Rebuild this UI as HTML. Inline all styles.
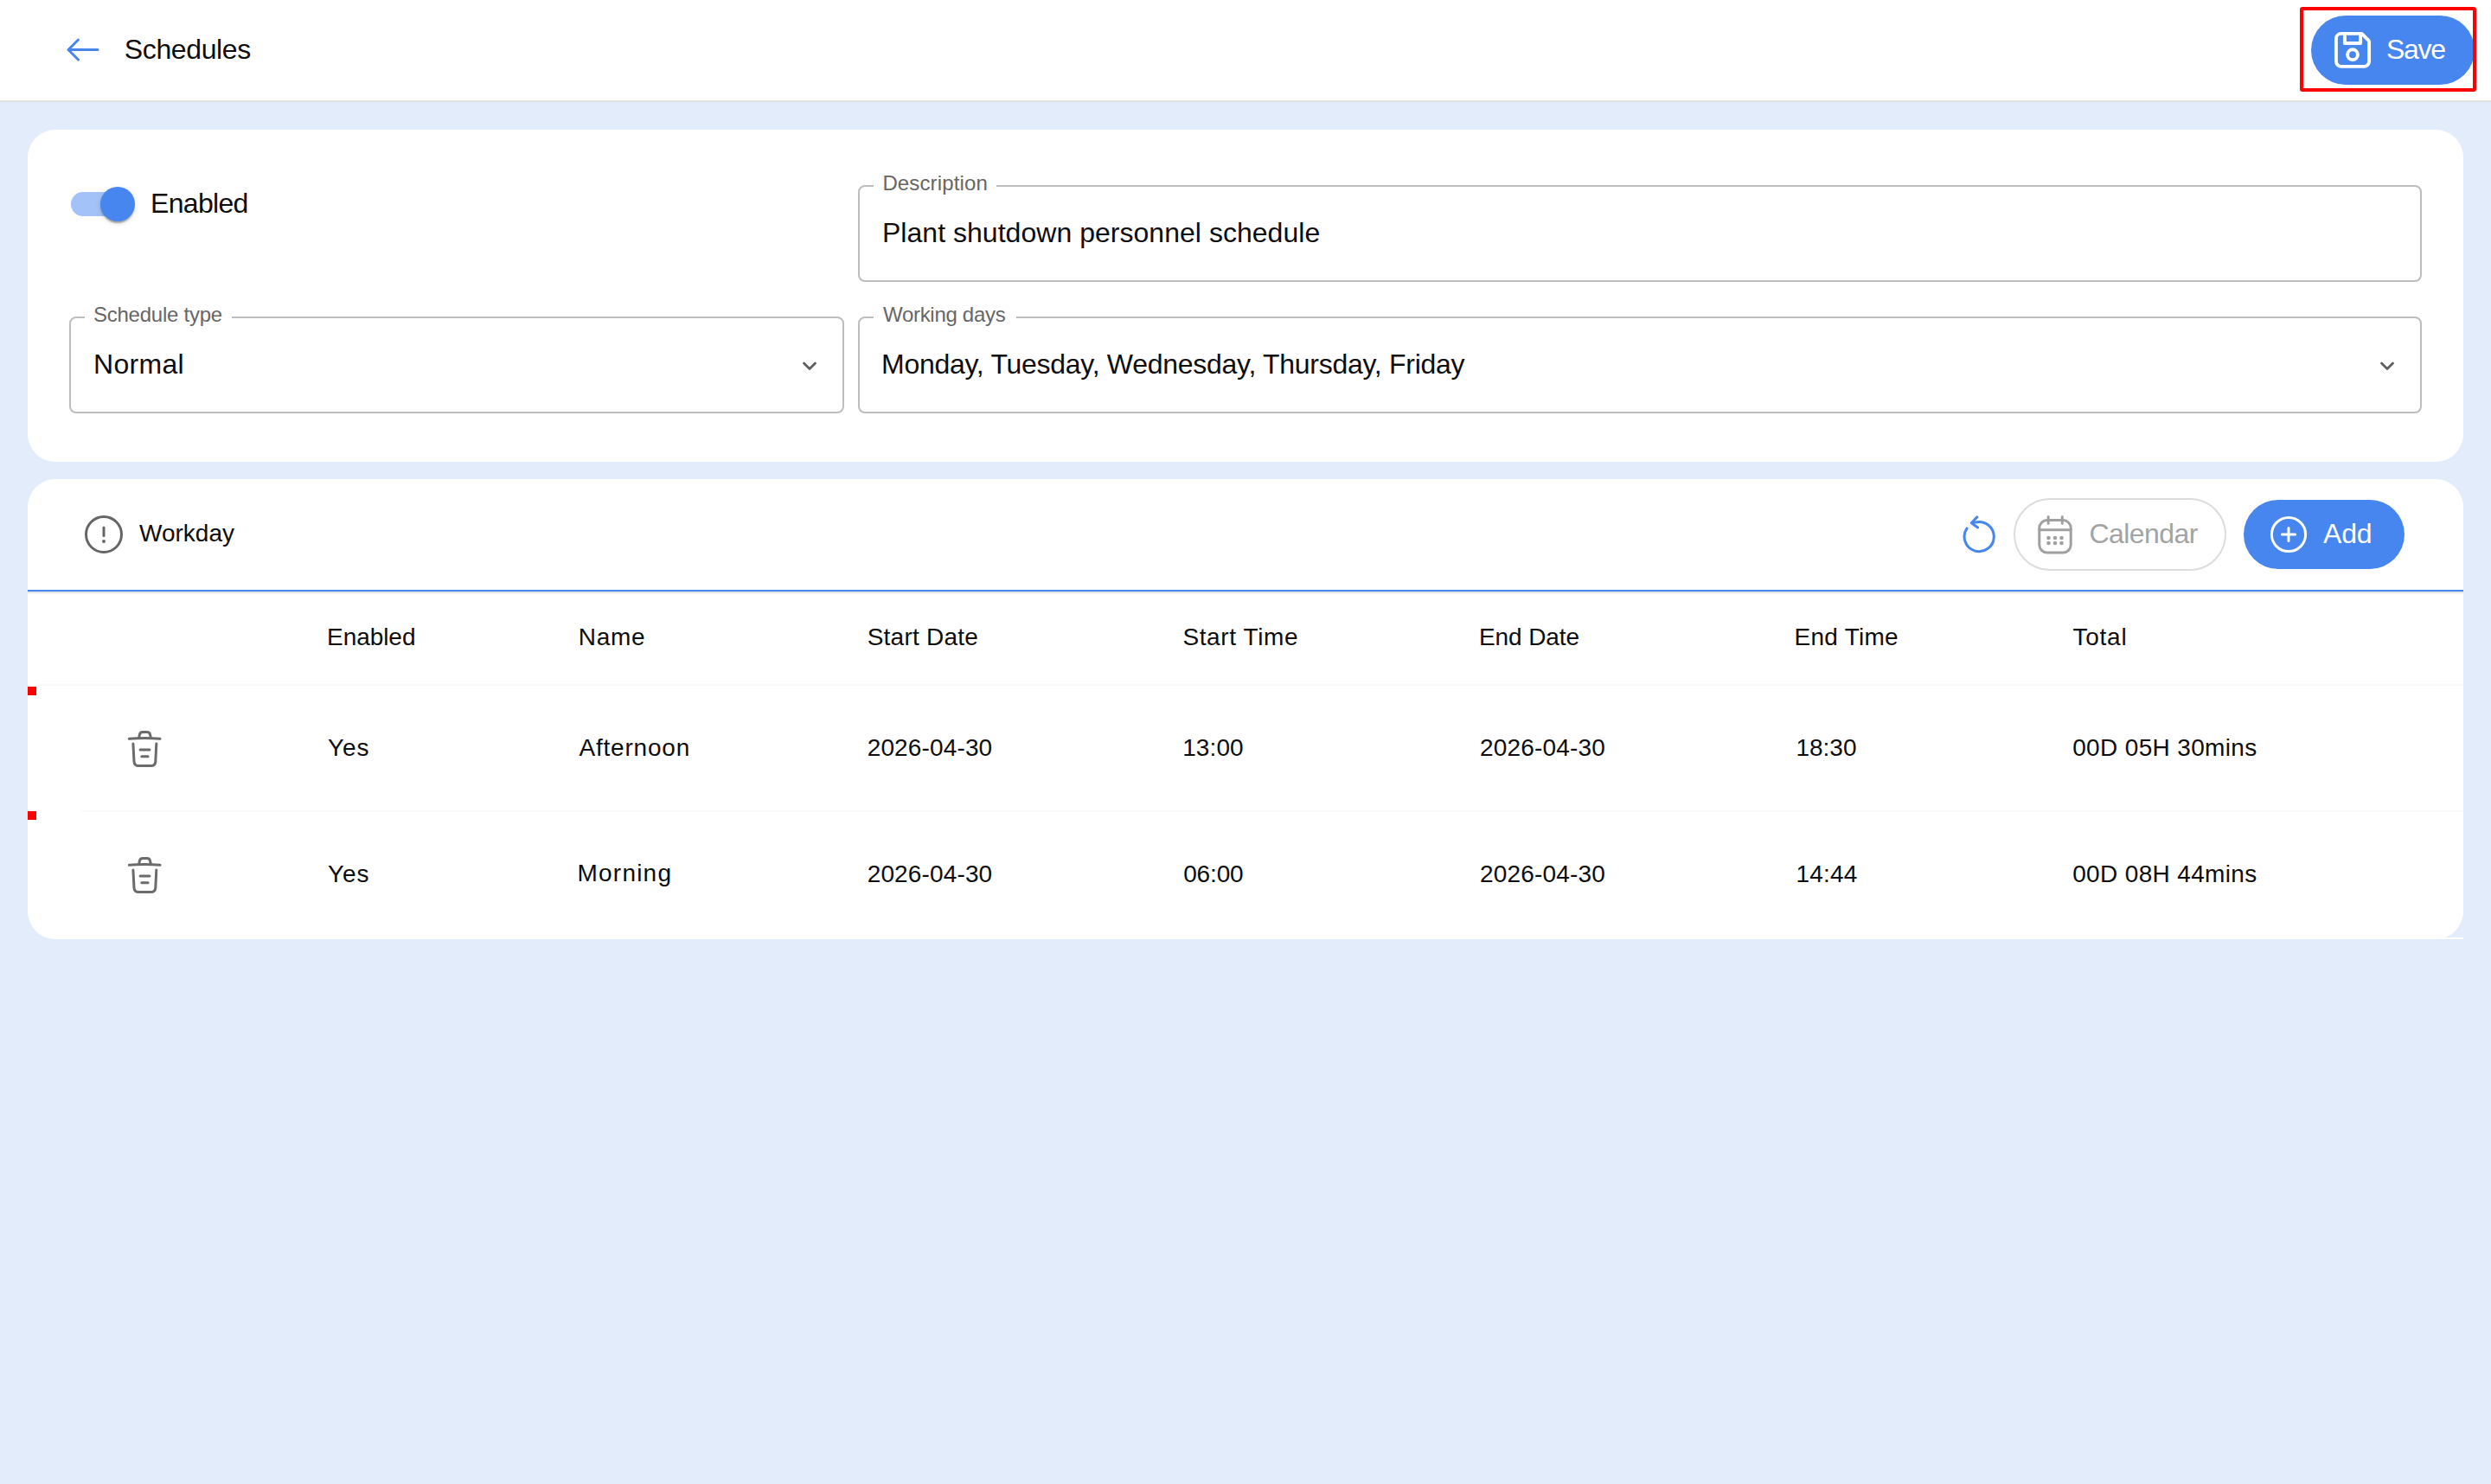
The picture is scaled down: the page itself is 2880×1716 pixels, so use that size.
<!DOCTYPE html>
<html><head><meta charset="utf-8">
<style>
html,body{margin:0;padding:0;}
body{width:2880px;height:1716px;position:relative;overflow:hidden;background:#E3ECFB;font-family:"Liberation Sans",sans-serif;color:#0d0d0d;}
.a{position:absolute;}
.t{position:absolute;white-space:nowrap;line-height:1;}
.f32{font-size:32px;}
.f28{font-size:28px;}
.f24{font-size:24px;}
#hdr{left:0;top:0;width:2880px;height:116px;background:#fff;border-bottom:2px solid #E3E3E3;}
.card{position:absolute;background:#fff;border-radius:32px;left:32px;width:2816px;}
.box{position:absolute;border:2px solid #BDBDBD;border-radius:8px;box-sizing:border-box;height:112px;}
.notch{position:absolute;background:#fff;height:6px;top:-4px;}
.lbl{color:#666;}
.btn{position:absolute;border-radius:40px;}
svg{position:absolute;overflow:visible;}
</style></head>
<body>
<div id="hdr" class="a"></div>
<svg style="left:0;top:0" width="2880" height="120">
  <path d="M79 57.5H113M90.5 46 79 57.5 90.5 69" fill="none" stroke="#4786EE" stroke-width="3" stroke-linecap="round" stroke-linejoin="round"/>
</svg>
<div class="t f32" id="t_sched" style="left:143.8px;top:41.1px;letter-spacing:-0.38px;">Schedules</div>

<div class="btn" style="left:2672px;top:18px;width:189px;height:80px;background:#4786EE;"></div>
<svg style="left:0;top:0" width="2880" height="120">
  <g fill="none" stroke="#fff" stroke-width="3.9" stroke-linejoin="round" stroke-linecap="round">
    <path d="M2707 38.9H2729.6Q2730.6 38.9 2731.4 39.7L2738.3 46.6Q2739.1 47.4 2739.1 48.4V70.9A6 6 0 0 1 2733.1 76.9H2706.9A6 6 0 0 1 2700.9 70.9V44.9A6 6 0 0 1 2706.9 38.9Z"/>
    <path d="M2710.9 39V50H2729.1V39"/>
    <circle cx="2720" cy="63.2" r="5.9"/>
  </g>
</svg>
<div class="t f32" id="t_save" style="left:2759.0px;top:41.3px;letter-spacing:-1.33px;color:#fff;">Save</div>

<!-- card 1 -->
<div class="card" style="top:150px;height:384px;"></div>
<div class="a" style="left:82px;top:222px;width:68px;height:28px;border-radius:14px;background:#A3C2F7;"></div>
<div class="a" style="left:116px;top:216px;width:40px;height:40px;border-radius:20px;background:#4786EE;box-shadow:0 4px 2px -2px rgba(0,0,0,.2),0 2px 2px 0 rgba(0,0,0,.14),0 2px 6px 0 rgba(0,0,0,.12);"></div>
<div class="t f32" id="t_en" style="left:174.0px;top:218.7px;letter-spacing:-0.67px;">Enabled</div>

<div class="box" style="left:992px;top:214px;width:1808px;"><div class="notch" style="left:16px;width:142px;"></div></div>
<div class="t f24 lbl" id="t_desc" style="left:1020.4px;top:200.0px;letter-spacing:0.13px;">Description</div>
<div class="t f32" id="t_plant" style="left:1020.0px;top:253.0px;letter-spacing:0.03px;">Plant shutdown personnel schedule</div>

<div class="box" style="left:80px;top:366px;width:896px;"><div class="notch" style="left:16px;width:170px;"></div></div>
<div class="t f24 lbl" id="t_stype" style="left:108.0px;top:352.0px;letter-spacing:-0.25px;">Schedule type</div>
<div class="t f32" id="t_normal" style="left:108.0px;top:405.0px;letter-spacing:0.3px;">Normal</div>

<div class="box" style="left:992px;top:366px;width:1808px;"><div class="notch" style="left:16px;width:165px;"></div></div>
<div class="t f24 lbl" id="t_wdays" style="left:1021.0px;top:352.0px;letter-spacing:-0.3px;">Working days</div>
<div class="t f32" id="t_monday" style="left:1019.0px;top:405.0px;letter-spacing:-0.28px;">Monday, Tuesday, Wednesday, Thursday, Friday</div>

<svg style="left:0;top:0" width="2880" height="500">
  <g fill="none" stroke="#5f5f5f" stroke-width="2.8" stroke-linecap="round" stroke-linejoin="round">
    <path d="M929.5 420 936 426.5 942.5 420"/>
    <path d="M2753.5 420 2760 426.5 2766.5 420"/>
  </g>
</svg>

<!-- card 2 -->
<div class="card" style="top:554px;height:532px;"></div>
<div class="a" style="left:2800px;top:1084px;width:48px;height:2px;background:#fff;"></div>

<svg style="left:0;top:0" width="2880" height="1100">
  <g fill="none" stroke="#666" stroke-width="3" stroke-linecap="round">
    <circle cx="120" cy="618" r="20.5"/>
    <path d="M120 610V619.5"/>
  </g>
  <circle cx="120" cy="626" r="2" fill="#666"/>
</svg>
<div class="t f28" id="t_workday" style="left:161.0px;top:603.0px;letter-spacing:0.0px;">Workday</div>

<!-- refresh -->
<svg style="left:0;top:0" width="2880" height="1100">
  <g fill="none" stroke="#4786EE" stroke-width="3" stroke-linecap="round" stroke-linejoin="round">
    <path d="M2274.1 610.9A17.1 17.1 0 1 0 2284 604L2280 604.6"/>
    <path d="M2285.8 597.9 2279.4 604.7 2286.6 610"/>
  </g>
</svg>

<div class="btn" style="left:2328px;top:576px;width:246px;height:84px;border:2px solid #DCDCDC;box-sizing:border-box;border-radius:42px;"></div>
<svg style="left:0;top:0" width="2880" height="1100">
  <g fill="none" stroke="#A0A0A0" stroke-width="3" stroke-linecap="round" stroke-linejoin="round">
    <rect x="2357.8" y="601.6" width="36.4" height="37.4" rx="9"/>
    <path d="M2368.2 597.6V605.2M2384.3 597.6V605.2M2357.8 612.8H2394.2"/>
  </g>
  <g fill="#A0A0A0">
    <circle cx="2368.5" cy="622" r="2.3"/><circle cx="2376" cy="622" r="2.3"/><circle cx="2383.5" cy="622" r="2.3"/>
    <circle cx="2368.5" cy="628" r="2.3"/><circle cx="2376" cy="628" r="2.3"/><circle cx="2383.5" cy="628" r="2.3"/>
  </g>
</svg>
<div class="t f32" id="t_cal" style="left:2415.5px;top:601.0px;letter-spacing:-0.57px;color:#A3A3A3;">Calendar</div>

<div class="btn" style="left:2594px;top:578px;width:186px;height:80px;background:#4786EE;"></div>
<svg style="left:0;top:0" width="2880" height="1100">
  <g fill="none" stroke="#fff" stroke-width="3" stroke-linecap="round">
    <circle cx="2646" cy="618" r="19.6"/>
    <path d="M2638.4 618H2653.6M2646 610.4V625.6"/>
  </g>
</svg>
<div class="t f32" id="t_add" style="left:2686.0px;top:601.0px;letter-spacing:-0.2px;color:#fff;">Add</div>

<div class="a" style="left:32px;top:682px;width:2816px;height:2px;background:#4786EE;"></div>
<div class="a" style="left:32px;top:684px;width:2816px;height:2px;background:#E6E6E6;"></div>

<!-- table header -->
<div class="t f28" id="h1" style="left:378.0px;top:722.8px;letter-spacing:-0.05px;">Enabled</div>
<div class="t f28" id="h2" style="left:668.8px;top:722.8px;letter-spacing:0.7px;">Name</div>
<div class="t f28" id="h3" style="left:1002.7px;top:722.8px;letter-spacing:0.23px;">Start Date</div>
<div class="t f28" id="h4" style="left:1367.4px;top:722.8px;letter-spacing:0.62px;">Start Time</div>
<div class="t f28" id="h5" style="left:1710.0px;top:722.8px;letter-spacing:-0.1px;">End Date</div>
<div class="t f28" id="h6" style="left:2074.6px;top:722.8px;letter-spacing:0.24px;">End Time</div>
<div class="t f28" id="h7" style="left:2396.4px;top:722.8px;letter-spacing:0.77px;">Total</div>

<div class="a" style="left:44px;top:791px;width:2804px;height:2px;background:#FAFAFA;"></div>
<div class="a" style="left:94px;top:937px;width:2754px;height:2px;background:#FAFAFA;"></div>

<!-- rows -->
<svg style="left:0;top:0" width="2880" height="1100">
  <g fill="none" stroke="#6b6b6b" stroke-width="3" stroke-linecap="round" stroke-linejoin="round">
    <g id="trash">
      <path d="M149.3 854.3Q167.2 852.6 185 854.3"/>
      <path d="M160.6 853.5 161.4 849.5Q162 846.6 165 846.6H170Q173 846.6 173.6 849.5L174.4 853.5"/>
      <path d="M153.9 860 155 880.6Q155.4 885.6 160.5 885.6H174.3Q179.4 885.6 179.8 880.6L180.8 860"/>
      <path d="M162.1 866.9H172.9M163.8 874.7H171.1"/>
    </g>
    <use href="#trash" y="146"/>
  </g>
</svg>
<div class="a" style="left:32px;top:794px;width:10px;height:10px;background:#FF0000;"></div>
<div class="a" style="left:32px;top:938px;width:10px;height:10px;background:#FF0000;"></div>

<div class="t f28" id="r1c1" style="left:379.0px;top:851.0px;letter-spacing:0.85px;">Yes</div>
<div class="t f28" id="r1c2" style="left:669.5px;top:851.0px;letter-spacing:0.79px;">Afternoon</div>
<div class="t f28" id="r1c3" style="left:1002.7px;top:851.0px;letter-spacing:0.14px;">2026-04-30</div>
<div class="t f28" id="r1c4" style="left:1367.2px;top:851.0px;letter-spacing:0.1px;">13:00</div>
<div class="t f28" id="r1c5" style="left:1711.0px;top:851.0px;letter-spacing:0.17px;">2026-04-30</div>
<div class="t f28" id="r1c6" style="left:2076.4px;top:851.0px;letter-spacing:0.0px;">18:30</div>
<div class="t f28" id="r1c7" style="left:2396.2px;top:851.0px;letter-spacing:0.35px;">00D 05H 30mins</div>

<div class="t f28" id="r2c1" style="left:379.0px;top:997.0px;letter-spacing:0.85px;">Yes</div>
<div class="t f28" id="r2c2" style="left:667.5px;top:996.0px;letter-spacing:1.22px;">Morning</div>
<div class="t f28" id="r2c3" style="left:1002.7px;top:997.0px;letter-spacing:0.14px;">2026-04-30</div>
<div class="t f28" id="r2c4" style="left:1368.2px;top:997.0px;letter-spacing:-0.15px;">06:00</div>
<div class="t f28" id="r2c5" style="left:1711.0px;top:997.0px;letter-spacing:0.17px;">2026-04-30</div>
<div class="t f28" id="r2c6" style="left:2076.4px;top:997.0px;letter-spacing:0.2px;">14:44</div>
<div class="t f28" id="r2c7" style="left:2396.2px;top:997.0px;letter-spacing:0.35px;">00D 08H 44mins</div>

<!-- annotation -->
<div class="a" style="left:2659px;top:8px;width:204px;height:98px;border:4.2px solid #FF0000;box-sizing:border-box;border-radius:3px;"></div>
</body></html>
